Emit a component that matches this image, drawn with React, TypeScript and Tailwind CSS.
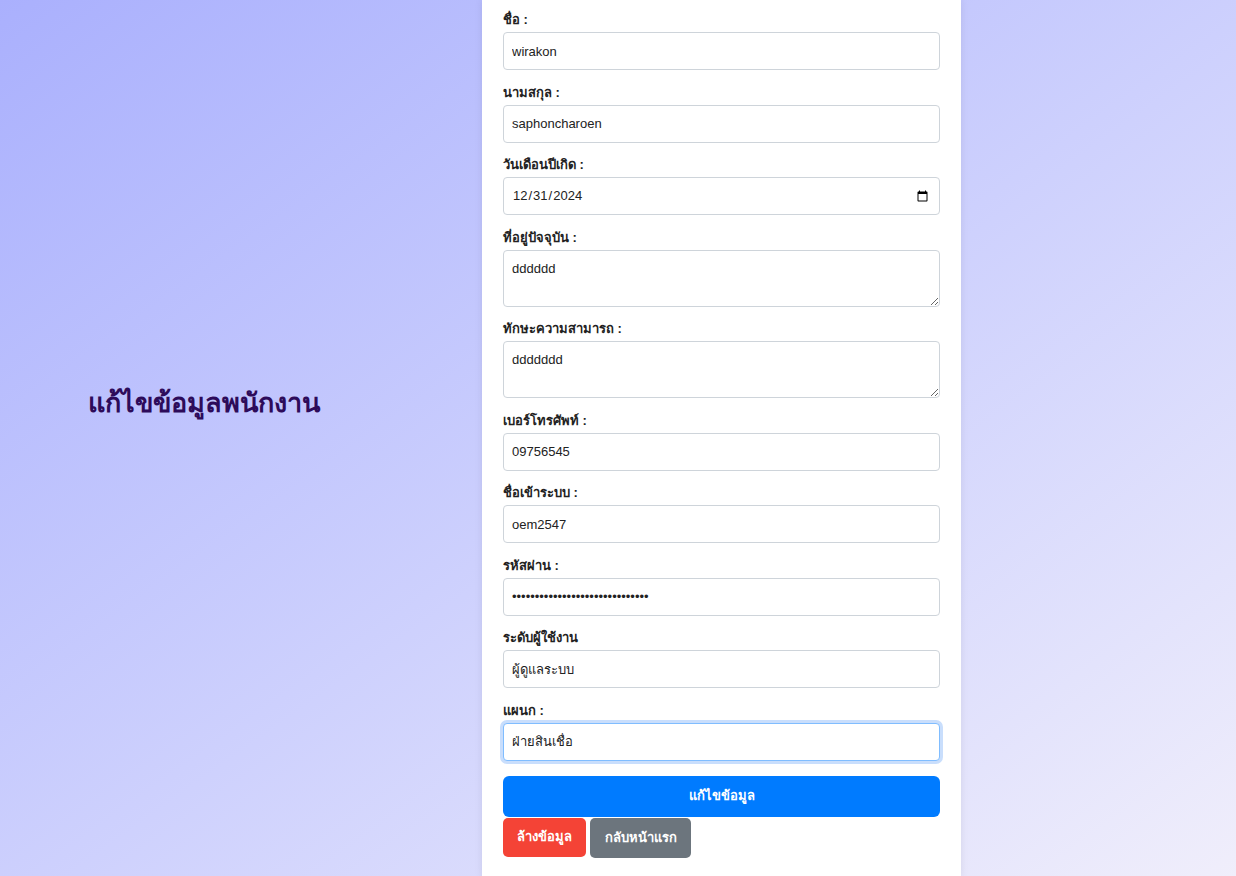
import React from "react";

const inputCls =
  "block w-full h-[38px] rounded-[4px] border border-[#ced4da] bg-white px-[8px] text-[13px] text-[#222] outline-none";

const areaCls =
  "block w-full h-[57px] rounded-[4px] border border-[#ced4da] bg-white px-[8px] py-[8px] text-[13px] text-[#222] outline-none";

function Field({ label, children }: { label: string; children: React.ReactNode }) {
  return (
    <div className="mb-[12.5px]">
      <label className="block text-[13px] font-bold text-[#222] leading-[19px] mb-[3px]">{label}</label>
      {children}
    </div>
  );
}

export default function App() {
  return (
    <div className="min-h-screen w-full bg-linear-to-br from-[#aab0fd] to-[#f0eefb] flex font-['Liberation_Sans',Tahoma,sans-serif]">
      {/* Left title */}
      <div className="w-[482px] flex items-center pl-[88px] pb-[72px]">
        <h1 className="text-[27px] font-bold text-[#2d0b5a]">แก้ไขข้อมูลพนักงาน</h1>
      </div>

      {/* Form panel */}
      <div className="w-[479px] bg-white shadow-[0_0_8px_rgba(0,0,0,0.08)] px-[21px] pt-[10px] pb-[20px]">
        <Field label="ชื่อ :">
          <input className={inputCls} defaultValue="wirakon" />
        </Field>
        <Field label="นามสกุล :">
          <input className={inputCls} defaultValue="saphoncharoen" />
        </Field>
        <Field label="วันเดือนปีเกิด :">
          <input type="date" className={inputCls} defaultValue="2024-12-31" />
        </Field>
        <Field label="ที่อยู่ปัจจุบัน :">
          <textarea className={areaCls} defaultValue="dddddd" />
        </Field>
        <Field label="ทักษะความสามารถ :">
          <textarea className={areaCls} defaultValue="ddddddd" />
        </Field>
        <Field label="เบอร์โทรศัพท์ :">
          <input className={inputCls} defaultValue="09756545" />
        </Field>
        <Field label="ชื่อเข้าระบบ :">
          <input className={inputCls} defaultValue="oem2547" />
        </Field>
        <Field label="รหัสผ่าน :">
          <input type="password" className={inputCls} defaultValue="••••••••••••••••••••••••••••••" />
        </Field>
        <Field label="ระดับผู้ใช้งาน">
          <input className={inputCls} defaultValue="ผู้ดูแลระบบ" />
        </Field>
        <Field label="แผนก :">
          <input
            className="block w-full h-[38px] rounded-[4px] border border-[#80bdff] bg-white px-[8px] text-[13px] text-[#222] outline-none ring-[3px] ring-[#c9defc]"
            defaultValue="ฝ่ายสินเชื่อ"
          />
        </Field>

        <button className="mt-[15px] block w-full h-[41px] rounded-[6px] bg-[#007bff] text-white text-[13px] font-bold">
          แก้ไขข้อมูล
        </button>
        <div className="flex gap-[4px] mt-[1px]">
          <button className="h-[39px] w-[83px] rounded-[5px] bg-[#f44336] text-white text-[13px] font-bold">
            ล้างข้อมูล
          </button>
          <button className="h-[40px] w-[101px] rounded-[5px] bg-[#6c757d] text-white text-[13px] font-bold">
            กลับหน้าแรก
          </button>
        </div>
      </div>
    </div>
  );
}
